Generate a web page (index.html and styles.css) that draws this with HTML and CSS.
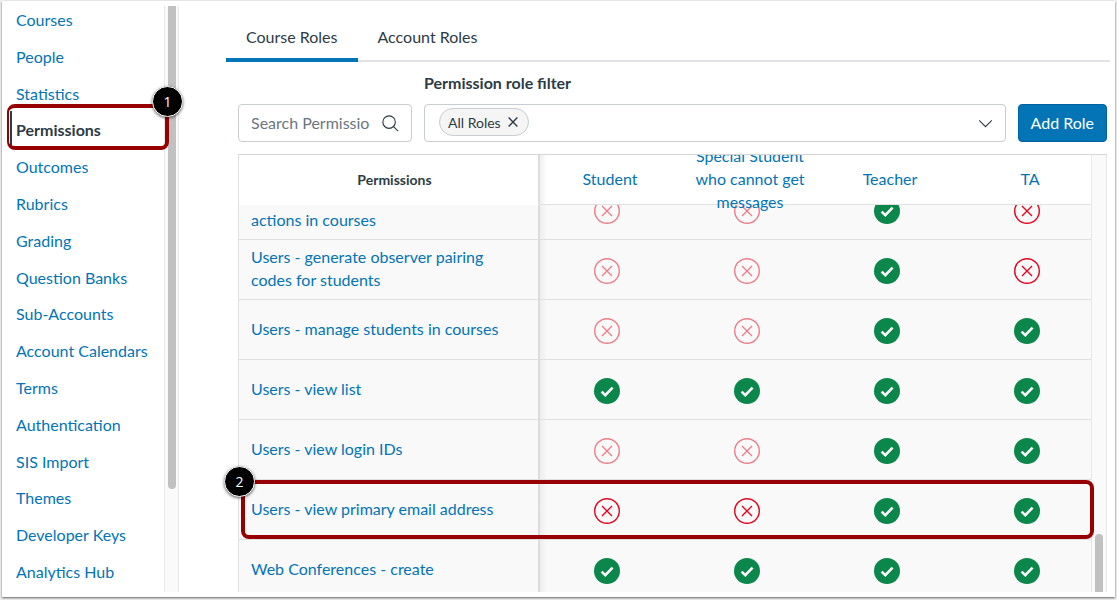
FILE: index.html
```
<!DOCTYPE html>
<html lang="en">
<head>
  <meta charset="UTF-8" />
  <meta name="viewport" content="width=device-width, initial-scale=1.0" />
  <title>Permissions</title>
  <link rel="stylesheet" href="styles.css">
</head>
<body>
  <svg class="defs" aria-hidden="true">
    <symbol id="icon-yes" viewBox="0 0 26 26">
      <circle cx="13" cy="13" r="13" fill="#0b874b" />
      <path d="M7.6 13.6 L11.3 17.1 L18.6 9.7" fill="none" stroke="#fff" stroke-width="2.6" />
    </symbol>
    <symbol id="icon-no" viewBox="0 0 26 26">
      <circle cx="13" cy="13" r="12.3" fill="none" stroke="#e0061f" stroke-width="1.4" />
      <path d="M8 8 L18 18 M18 8 L8 18" fill="none" stroke="#e0061f" stroke-width="1.4" />
    </symbol>
  </svg>

  <div class="frame">
    <div class="sidebar">
      <nav>
        <ul class="menu">
          <li><a href="#">Courses</a></li>
          <li><a href="#">People</a></li>
          <li><a href="#">Statistics</a></li>
          <li class="active">
            <a href="#">Permissions</a>
            <span class="callout callout-menu"><span class="badge">1</span></span>
          </li>
          <li><a href="#">Outcomes</a></li>
          <li><a href="#">Rubrics</a></li>
          <li><a href="#">Grading</a></li>
          <li><a href="#">Question Banks</a></li>
          <li><a href="#">Sub-Accounts</a></li>
          <li><a href="#">Account Calendars</a></li>
          <li><a href="#">Terms</a></li>
          <li><a href="#">Authentication</a></li>
          <li><a href="#">SIS Import</a></li>
          <li><a href="#">Themes</a></li>
          <li><a href="#">Developer Keys</a></li>
          <li><a href="#">Analytics Hub</a></li>
        </ul>
      </nav>
      <div class="scrollbar"><div class="thumb thumb-menu"></div></div>
    </div>

    <main>
      <div class="tabs" role="tablist">
        <button class="active" role="tab" aria-selected="true">Course Roles</button>
        <button role="tab" aria-selected="false">Account Roles</button>
      </div>

      <div class="content">
        <div class="toolbar">
          <div class="field search">
            <input type="text" placeholder="Search Permissions" aria-label="Search Permissions">
            <svg width="17" height="17" viewBox="0 0 18 18" fill="none" stroke="#2d3b45" stroke-width="1.2">
              <circle cx="7.5" cy="7.5" r="6.6" />
              <path d="M12 12 L17 17" />
            </svg>
          </div>
          <div class="filter">
            <label for="roleFilter">Permission role filter</label>
            <div class="field">
              <button class="tag">All Roles
                <svg width="10" height="10" viewBox="0 0 10 10" stroke="#2d3b45" stroke-width="1.4"><path d="M.6 .6 L9.4 9.4 M9.4 .6 L.6 9.4" /></svg>
              </button>
              <input type="text" id="roleFilter" role="combobox" aria-expanded="false">
              <svg width="15" height="9" viewBox="0 0 16 10" fill="none" stroke="#2d3b45" stroke-width="1.2"><path d="M1 1.5 L8 8.5 L15 1.5" /></svg>
            </div>
          </div>
          <button class="add">Add Role</button>
        </div>

        <div class="grid">
          <div class="viewport">
            <table>
              <thead>
                <tr>
                  <th class="name">Permissions</th>
                  <th><a href="#">Student</a></th>
                  <th><a href="#">Special Student who cannot get messages</a></th>
                  <th><a href="#">Teacher</a></th>
                  <th><a href="#">TA</a></th>
                </tr>
              </thead>
              <tbody id="rows"></tbody>
            </table>
          </div>
          <div class="scrollbar"><div class="thumb thumb-grid"></div></div>
          <span class="callout callout-row"><span class="badge">2</span></span>
        </div>
      </div>
    </main>
  </div>

  <script>
    // y = enabled, n = disabled, l = disabled and locked
    const permissions = [
      ["actions in courses", "llyn"],
      ["Users - generate observer pairing codes for students", "llyn"],
      ["Users - manage students in courses", "llyy"],
      ["Users - view list", "yyyy"],
      ["Users - view login IDs", "llyy"],
      ["Users - view primary email address", "nnyy"],
      ["Web Conferences - create", "yyyy"]
    ];
    const labels = { y: "Enabled", n: "Disabled", l: "Disabled, locked" };

    function renderRows() {
      document.getElementById("rows").innerHTML = permissions.map(([name, states], i) => `
        <tr class="${i === 0 ? "cut" : ""}">
          <td class="name"><div class="cell"><a href="#">${name}</a></div></td>
          ${[...states].map(s => `
            <td><div class="cell">
              <button class="state ${s === "l" ? "locked" : ""}" aria-label="${labels[s]}">
                <svg width="26" height="26"><use href="#icon-${s === "y" ? "yes" : "no"}" /></svg>
              </button>
            </div></td>`).join("")}
        </tr>`).join("");
    }

    renderRows();
  </script>
</body>
</html>
```
FILE: styles.css
```
* {
  box-sizing: border-box;
}
body {
  margin: 0;
  padding: 1px 2px 3px;
  background: #f0f0f0;
  color: #2d3b45;
  font-family: Lato, sans-serif;
  font-size: 16px;
  line-height: 23px;
}
a {
  color: #0374b5;
  text-decoration: none;
}
button, input {
  font: inherit;
  color: inherit;
}
button {
  cursor: pointer;
}
.defs {
  position: absolute;
  width: 0;
  height: 0;
}
.frame {
  display: flex;
  height: calc(100vh - 4px);
  padding: 5px;
  background: #fff;
  box-shadow: 0 1px 2px rgba(0,0,0,0.6);
}

/* sidebar */
.sidebar {
  display: flex;
  flex: none;
  width: 172px;
}
.sidebar nav {
  flex: 1;
  padding: 2px 0 8px;
}
.menu {
  display: flex;
  flex-direction: column;
  justify-content: space-between;
  height: 100%;
  margin: 0;
  padding: 0;
  list-style: none;
}
.menu li {
  position: relative;
  padding-left: 9px;
  line-height: 24px;
  white-space: nowrap;
}
.menu .active a {
  color: #2d3b45;
  font-weight: bold;
}
.menu .active::before {
  content: "";
  position: absolute;
  left: 3px;
  top: -7px;
  bottom: -4px;
  width: 2px;
  background: #2d3b45;
}
.scrollbar {
  display: flex;
  flex: none;
  flex-direction: column;
  align-items: center;
  width: 15px;
  background: #fafafa;
  border: solid #e8e8e8;
  border-width: 0 1px;
}
.thumb {
  width: 8px;
  background: #c1c1c1;
}
.thumb-menu {
  height: 483px;
  border-radius: 0 0 4px 4px;
}
.thumb-grid {
  height: 58px;
  margin-top: auto;
  border-radius: 4px 4px 0 0;
}

/* numbered callouts */
.callout {
  position: absolute;
  z-index: 3;
  border: 4px solid #960000;
  border-radius: 8px;
  pointer-events: none;
}
.callout-menu {
  left: 0;
  right: -5px;
  top: -14px;
  bottom: -8px;
  border-left-width: 2px;
}
.callout-row {
  left: 3px;
  right: 13px;
  top: 325px;
  height: 59px;
}
.badge {
  position: absolute;
  width: 31px;
  height: 31px;
  border: 1px solid #fff;
  border-radius: 50%;
  background: #000;
  box-shadow: 0 1px 3px rgba(0,0,0,0.6);
  color: #fff;
  font: 14px/29px "Open Sans", sans-serif;
  text-align: center;
}
.callout-menu .badge {
  right: -18px;
  top: -22px;
}
.callout-row .badge {
  left: -21px;
  top: -18px;
}

/* main */
main {
  display: flex;
  flex: 1;
  flex-direction: column;
  min-width: 0;
  padding-left: 47px;
}
.tabs {
  display: flex;
  padding-top: 8px;
  border-bottom: 2px solid #dfe3e6;
}
.tabs button {
  height: 48px;
  margin-bottom: -2px;
  padding: 0 20px;
  background: none;
  border: solid transparent;
  border-width: 0 0 4px;
}
.tabs .active {
  border-color: #0374b5;
}
.content {
  display: flex;
  flex: 1;
  flex-direction: column;
  min-height: 0;
  padding: 9px 3px 0 12px;
}
.toolbar {
  display: flex;
  align-items: flex-end;
  gap: 12px;
  margin-bottom: 12px;
}
.field {
  display: flex;
  align-items: center;
  height: 38px;
  padding: 0 12px;
  border: 1px solid #c7cdd1;
  border-radius: 4px;
}
.field input {
  flex: 1;
  min-width: 0;
  padding: 0;
  border: 0;
  outline: 0;
  background: none;
}
.field input::placeholder {
  color: #6b7780;
  opacity: 1;
}
.search {
  gap: 12px;
  width: 174px;
}
.filter {
  flex: 1;
}
.filter label {
  display: block;
  margin-bottom: 10px;
  font-weight: bold;
}
.filter .field {
  padding-left: 14px;
}
.field input, .tag {
  margin-bottom: 2px;
}
.tag {
  display: flex;
  align-items: center;
  gap: 7px;
  height: 28px;
  padding: 0 10px 0 8px;
  border: 1px solid #c7cdd1;
  border-radius: 14px;
  background: #f5f5f5;
  font-size: 14px;
}
.add {
  height: 38px;
  padding: 0 12px 2px;
  border: 1px solid #0262a0;
  border-radius: 4px;
  background: #0374b5;
  color: #fff;
}

/* permissions grid */
.grid {
  position: relative;
  display: flex;
  flex: 1;
  min-height: 0;
  border-top: 1px solid #d5d5d5;
}
.grid .scrollbar {
  width: 16px;
}
.viewport {
  flex: 1;
  overflow: hidden;
  border-left: 1px solid #e0e0e0;
}
table {
  width: 100%;
  min-width: 861px;
  table-layout: fixed;
  border-collapse: separate;
  border-spacing: 0;
}
thead {
  position: relative;
  z-index: 1;
}
th {
  height: 50px;
  padding: 0;
  border-bottom: 1px solid #e0e0e0;
  font-weight: normal;
}
th a {
  display: flex;
  align-items: center;
  justify-content: center;
  height: 49px;
  padding: 0 12px 2px;
}
th.name {
  padding-left: 12px;
  border-bottom-color: #fff;
  font-size: 14px;
  font-weight: bold;
}
.name {
  width: 301px;
  border-right: 2px solid #dcdcdc;
}
.name + th {
  background: linear-gradient(to right, #f0f0f0, #fff 7px);
}
td {
  padding: 0;
  background: #f9f9f9;
  border-bottom: 1px solid #e0e0e0;
}
.name + td {
  background: linear-gradient(to right, #eee, #f9f9f9 7px);
}
.cell {
  display: flex;
  align-items: center;
  justify-content: center;
  height: 59px;
  overflow: hidden;
}
.name .cell {
  justify-content: flex-start;
  padding: 0 30px 3px 12px;
}
.state {
  display: flex;
  padding: 3px 6px 0 0;
  border: 0;
  background: none;
}
.locked {
  opacity: 0.5;
}
/* first row is partly scrolled under the header */
.cut .cell {
  align-items: flex-end;
  height: 34px;
  padding-bottom: 15px;
}
.cut .name .cell {
  padding-bottom: 8px;
}
.cut .state {
  margin-top: -10px;
}
```
